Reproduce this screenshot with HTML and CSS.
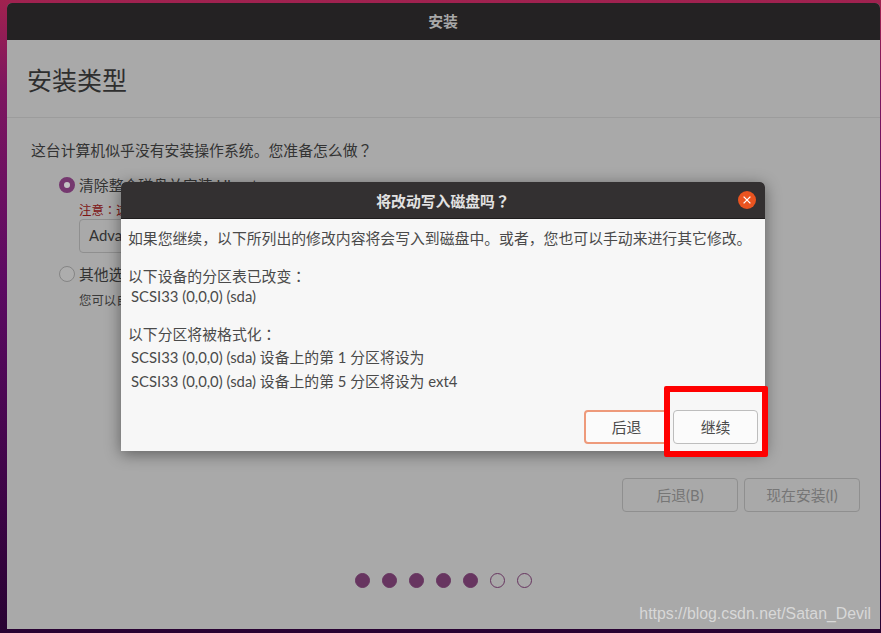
FILE: index.html
```html
<!DOCTYPE html>
<html lang="zh-CN">
<head>
  <meta charset="UTF-8">
  <meta name="viewport" content="width=device-width, initial-scale=1.0">
  <title>安装</title>
  <link rel="stylesheet" href="styles.css">
</head>
<body>
  <div class="desktop">
    <div class="window">
      <div class="titlebar">安装</div>
      <div class="heading"><h1>安装类型</h1></div>
      <div class="content">
        <p class="question">这台计算机似乎没有安装操作系统。您准备怎么做<span class="punct" lang="ja">？</span></p>

        <div class="option">
          <span class="radio checked"></span>
          <span class="option-label">清除整个磁盘并安装 Ubuntu</span>
        </div>
        <div class="option-detail">
          <p class="warning">注意<span class="punct" lang="ja">：</span>这将会删除所有系统里面的全部程序、文档、照片、音乐和其他文件。</p>
          <div class="advanced">Advanced features...</div>
        </div>

        <div class="option option-other">
          <span class="radio"></span>
          <span class="option-label">其他选项</span>
        </div>
        <div class="option-detail">
          <p class="hint">您可以自己创建、调整分区，或者为 Ubuntu 选择多个分区。</p>
        </div>
      </div>

      <div class="footer">
        <button class="btn btn-off" type="button">后退(B)</button>
        <button class="btn btn-off" type="button">现在安装(I)</button>
      </div>

      <div class="dots">
        <span class="dot on"></span>
        <span class="dot on"></span>
        <span class="dot on"></span>
        <span class="dot on"></span>
        <span class="dot on"></span>
        <span class="dot"></span>
        <span class="dot"></span>
      </div>
    </div>

    <div class="dialog">
      <div class="dialog-title">
        <span>将改动写入磁盘吗<span class="punct" lang="ja">？</span></span>
        <span class="close">
          <svg width="18" height="18" viewBox="0 0 18 18"><path d="M5.6 5.6l6.8 6.8M12.4 5.6l-6.8 6.8" stroke="#fff" stroke-width="1.3" fill="none"/></svg>
        </span>
      </div>
      <div class="dialog-body">
        <p class="intro">如果您继续，以下所列出的修改内容将会写入到磁盘中。或者，您也可以手动来进行其它修改。</p>
        <p class="group-head">以下设备的分区表已改变<span class="punct" lang="ja">：</span></p>
        <p class="device">SCSI33 (0,0,0) (sda)</p>
        <p class="group-head">以下分区将被格式化<span class="punct" lang="ja">：</span></p>
        <p class="device device-first">SCSI33 (0,0,0) (sda) 设备上的第 1 分区将设为</p>
        <p class="device device-next">SCSI33 (0,0,0) (sda) 设备上的第 5 分区将设为 ext4</p>
      </div>
      <div class="dialog-actions">
        <button class="btn btn-back" type="button">后退</button>
        <button class="btn btn-go" type="button">继续</button>
      </div>
    </div>

    <div class="redbox"></div>
    <div class="watermark">https://blog.csdn.net/Satan_Devil</div>
  </div>
</body>
</html>
```

FILE: styles.css
```css
*{margin:0;padding:0;box-sizing:border-box;}
body{font-family:Lato,"Noto Sans CJK SC",sans-serif;font-size:14.85px;overflow:hidden;}
/* the screenshot centres full-width ？ and ： in their cell */
.punct{font-family:"Noto Sans CJK JP",sans-serif;}

/* wallpaper */
.desktop{position:relative;width:881px;height:633px;padding:3px 1px 4px 7px;background:linear-gradient(180deg,#a0224f 0%,#7d1660 14%,#5c0a62 45%,#3c0445 80%,#280232 100%);}
.window{height:626px;display:flex;flex-direction:column;background:#a9a9a9;border-radius:5px 5px 0 0;overflow:hidden;}
.titlebar{height:37px;flex:none;background:#242223;color:#a8a8a8;font-size:14.85px;font-weight:700;line-height:37px;text-align:center;padding-right:1px;}
.heading{height:78px;flex:none;border-bottom:1px solid #9c9c9c;padding:21px 0 0 20px;}
.heading h1{font-size:25px;font-weight:400;line-height:38px;color:#2e2e2e;}

.content{flex:1;padding:22px 0 0 24px;color:#333;}
.question{line-height:20px;}
.option{display:flex;align-items:center;gap:4px;margin:15px 0 0 28px;height:20px;}
.option-other{margin-top:11px;}
.radio{width:16px;height:16px;border-radius:50%;border:1px solid #858585;background:#adadad;flex:none;}
.radio.checked{border:5px solid #75386f;background:#c4c4c4;}
.option-label{color:#333;white-space:nowrap;line-height:20px;}
.option-detail{margin-left:48px;}
.warning{font-size:12.4px;line-height:17px;color:#7d1414;margin-top:7px;white-space:nowrap;}
.advanced{width:300px;height:34px;border:1px solid #8f8f8f;border-radius:4px;line-height:30px;padding-left:9px;color:#333;}
.hint{font-size:12.4px;line-height:18px;color:#3a3a3a;margin-top:8px;white-space:nowrap;}

.btn{font:inherit;height:34px;border-radius:4px;border:1px solid #8f8f8f;background:none;text-align:center;padding-bottom:2px;}
.footer{flex:none;display:flex;justify-content:flex-end;gap:6px;padding-right:20px;margin-bottom:61px;}
.btn-off{width:116px;color:#767676;}

.dots{flex:none;display:flex;justify-content:center;gap:12px;margin-bottom:41px;}
.dot{width:15px;height:15px;border-radius:50%;border:1px solid #673560;}
.dot.on{background:#673560;}

/* modal on top of the installer */
.dialog{position:absolute;left:121px;top:182px;width:644px;height:269px;display:flex;flex-direction:column;background:#f7f7f7;border-radius:5px 5px 0 0;box-shadow:0 3px 16px rgba(0,0,0,.45);color:#4a4a4a;}
.dialog-title{height:37px;flex:none;position:relative;background:#333031;border-bottom:1px solid #1f1d1e;border-radius:5px 5px 0 0;color:#e2e2e2;font-size:14.85px;font-weight:700;line-height:37px;text-align:center;}
.close{position:absolute;right:9px;top:9px;width:18px;height:18px;border-radius:50%;background:#e95420;display:flex;}
.dialog-body{flex:1;padding:9px 0 0 7px;}
.dialog-body p{line-height:20px;white-space:nowrap;}
.group-head{margin-top:18px;}
.device{padding-left:3px;}
.device-first{margin-top:3px;}
.device-next{margin-top:4px;}
.dialog-actions{flex:none;display:flex;justify-content:flex-end;gap:4px;padding:0 7px 7px 0;}
.btn-back,.btn-go{width:85px;background:#fbfbfb;color:#4a4a4a;}
.btn-back{border-color:#ee9a7b;border-width:2px;}
.btn-go{border-color:#bdbdbd;}

/* annotations added to the screenshot */
.redbox{position:absolute;left:664px;top:386px;width:104px;height:71px;border:6px solid #f00;border-radius:2px;}
.watermark{position:absolute;right:10px;top:604px;font-family:"Liberation Sans",Arial,sans-serif;font-size:15.85px;line-height:20px;color:#d8d8d8;}
```
